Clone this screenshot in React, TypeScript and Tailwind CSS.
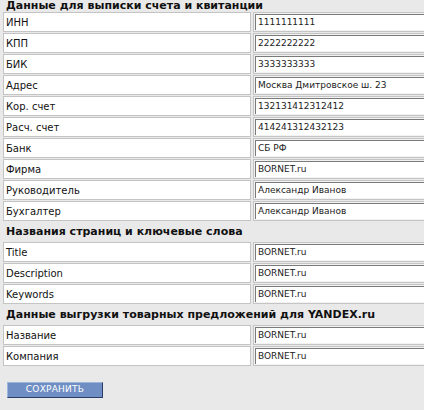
const sections: { title: string; rows: [string, string][] }[] = [
  {
    title: "Данные для выписки счета и квитанции",
    rows: [
      ["ИНН", "1111111111"],
      ["КПП", "2222222222"],
      ["БИК", "3333333333"],
      ["Адрес", "Москва Дмитровское ш. 23"],
      ["Кор. счет", "132131412312412"],
      ["Расч. счет", "414241312432123"],
      ["Банк", "СБ РФ"],
      ["Фирма", "BORNET.ru"],
      ["Руководитель", "Александр Иванов"],
      ["Бухгалтер", "Александр Иванов"],
    ],
  },
  {
    title: "Названия страниц и ключевые слова",
    rows: [
      ["Title", "BORNET.ru"],
      ["Description", "BORNET.ru"],
      ["Keywords", "BORNET.ru"],
    ],
  },
  {
    title: "Данные выгрузки товарных предложений для YANDEX.ru",
    rows: [
      ["Название", "BORNET.ru"],
      ["Компания", "BORNET.ru"],
    ],
  },
];

export default function App() {
  return (
    <div
      className="w-[424px] h-[410px] overflow-hidden bg-[#e9e9e9] text-[#111]"
      style={{ fontFamily: '"DejaVu Sans", Verdana, sans-serif' }}
    >
      <div className="pl-[3px] w-[440px] flex flex-col">
        {sections.map((s, i) => (
          <div key={s.title} className="flex flex-col">
            <div
              className={`${i === 0 ? "h-[12px]" : "h-[20px]"} flex items-center pl-[3px] text-[11px] font-bold`}
            >
              {s.title}
            </div>
            {s.rows.map(([label, value]) => (
              <div key={label} className="h-[21px] flex gap-[2px] pb-[1px]">
                <div className="w-[248px] bg-white border border-[#c4c4c4] flex items-center pl-[2px] text-[10px]">
                  {label}
                </div>
                <div className="flex-1 bg-[#f2f2f2] border border-[#c4c4c4] py-[1px] pl-[1px]">
                  <div className="h-full bg-white border-t border-l border-[#7a7a7a] flex items-center pl-[2px] text-[9px] text-[#222]">
                    {value}
                  </div>
                </div>
              </div>
            ))}
          </div>
        ))}
      </div>
      <button className="ml-[7px] mt-[15px] w-[96px] h-[16px] bg-[#6f8fc4] border border-t-[#9db4dc] border-l-[#9db4dc] border-r-[#2a3d66] border-b-[#2a3d66] text-white text-[9px] tracking-wide flex items-center justify-center">
        СОХРАНИТЬ
      </button>
    </div>
  );
}
